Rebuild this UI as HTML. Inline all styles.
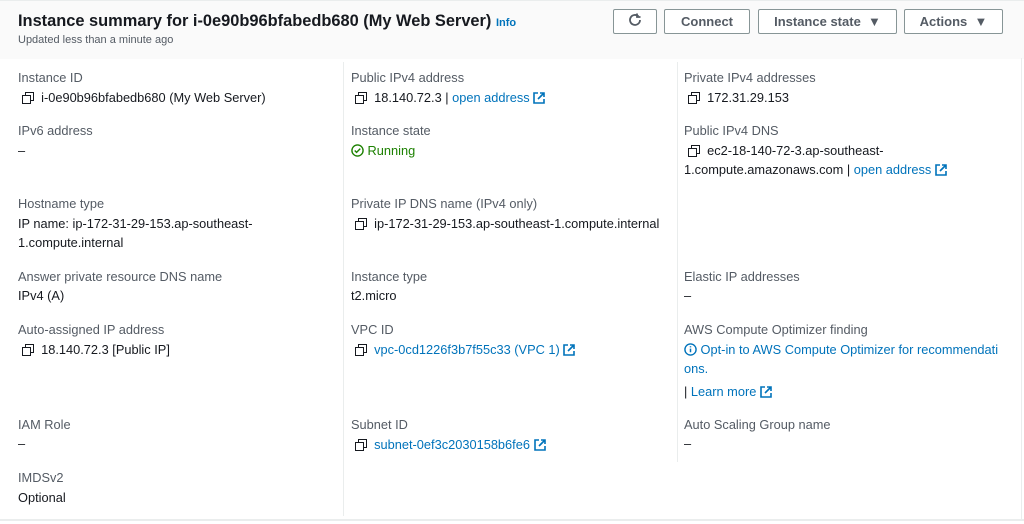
<!DOCTYPE html>
<html><head><meta charset="utf-8"><style>
body{margin:0;width:1024px;height:524px;background:#fff;font-family:"Liberation Sans",Arial,sans-serif;position:relative;overflow:hidden;color:#16191f}
.hd{position:absolute;left:0;top:0;width:1024px;height:58px;background:#fafafa;border-top:1px solid #eaeded}
.t{position:absolute;font-size:12.8px;line-height:16px;white-space:nowrap}
.l{color:#545b64}
a,.a{color:#0073bb;text-decoration:none}
.btn{position:absolute;top:9px;height:23px;border:1px solid #879596;border-radius:2px;background:#fff;font-weight:bold;font-size:13px;line-height:23px;text-align:center;color:#545b64;box-sizing:border-box}
.vl{position:absolute;width:1px;background:#eaeded}
svg{vertical-align:-2px}
</style></head><body>
<div class="hd"></div>
<div class="t" style="left:18px;top:11px;font-size:16.4px;line-height:20px;font-weight:bold">Instance summary for i-0e90b96bfabedb680 (My Web Server) <span class="a" style="font-size:11px">Info</span></div>
<div class="t l" style="left:18px;top:32px;font-size:11px">Updated less than a minute ago</div>
<div class="btn" style="left:613px;width:44px;height:25px;line-height:22px"><svg width="16" height="16" viewBox="0 0 16 16" style="vertical-align:-3px"><path d="M13 8a5 5 0 1 1-1.5-3.6" fill="none" stroke="#545b64" stroke-width="1.8"/><path d="M10 1.5v3.5h3.5" fill="none" stroke="#545b64" stroke-width="1.8"/></svg></div>
<div class="btn" style="left:664px;width:86px;height:25px">Connect</div>
<div class="btn" style="left:758px;width:139px;height:25px">Instance state &nbsp;▼</div>
<div class="btn" style="left:904px;width:99px;height:25px">Actions &nbsp;▼</div>
<div class="vl" style="left:343px;top:62px;height:454px"></div>
<div class="vl" style="left:677px;top:62px;height:400px"></div>
<div style="position:absolute;left:0;top:519px;width:1024px;height:2px;background:#eaeded"></div>
<div class="vl" style="left:1021px;top:58px;height:462px"></div>

<div class="t l" style="left:18px;top:70px">Instance ID</div>
<div class="t" style="left:22px;top:90px"><svg width="12" height="12" viewBox="0 0 12 12"><rect x="0.5" y="3.5" width="8" height="8" fill="none" stroke="#16191f"/><path d="M3.5 3.5v-3h8v8h-3" fill="none" stroke="#16191f"/></svg>&nbsp; i-0e90b96bfabedb680 (My Web Server)</div>
<div class="t l" style="left:18px;top:123px">IPv6 address</div>
<div class="t" style="left:18px;top:143px">–</div>
<div class="t l" style="left:18px;top:196px">Hostname type</div>
<div class="t" style="left:18px;top:216px">IP name: ip-172-31-29-153.ap-southeast-</div>
<div class="t" style="left:18px;top:235px">1.compute.internal</div>
<div class="t l" style="left:18px;top:269px">Answer private resource DNS name</div>
<div class="t" style="left:18px;top:288px">IPv4 (A)</div>
<div class="t l" style="left:18px;top:322px">Auto-assigned IP address</div>
<div class="t" style="left:22px;top:342px"><svg width="12" height="12" viewBox="0 0 12 12"><rect x="0.5" y="3.5" width="8" height="8" fill="none" stroke="#16191f"/><path d="M3.5 3.5v-3h8v8h-3" fill="none" stroke="#16191f"/></svg>&nbsp; 18.140.72.3 [Public IP]</div>
<div class="t l" style="left:18px;top:417px">IAM Role</div>
<div class="t" style="left:18px;top:436px">–</div>
<div class="t l" style="left:18px;top:470px">IMDSv2</div>
<div class="t" style="left:18px;top:490px">Optional</div>

<div class="t l" style="left:351px;top:70px">Public IPv4 address</div>
<div class="t" style="left:355px;top:90px"><svg width="12" height="12" viewBox="0 0 12 12"><rect x="0.5" y="3.5" width="8" height="8" fill="none" stroke="#16191f"/><path d="M3.5 3.5v-3h8v8h-3" fill="none" stroke="#16191f"/></svg>&nbsp; 18.140.72.3 | <span class="a">open address <svg width="12" height="12" viewBox="0 0 12 12"><path d="M5 1H1v10h10V7M7 1h4v4M11 1L5 7" fill="none" stroke="#0073bb" stroke-width="1.6"/></svg></span></div>
<div class="t l" style="left:351px;top:123px">Instance state</div>
<div class="t" style="left:351px;top:143px;color:#1d8102"><svg width="13" height="13" viewBox="0 0 14 14"><circle cx="7" cy="7" r="6" fill="none" stroke="#1d8102" stroke-width="1.5"/><path d="M4 7l2 2 4-4" fill="none" stroke="#1d8102" stroke-width="1.5"/></svg> Running</div>
<div class="t l" style="left:351px;top:196px">Private IP DNS name (IPv4 only)</div>
<div class="t" style="left:355px;top:216px"><svg width="12" height="12" viewBox="0 0 12 12"><rect x="0.5" y="3.5" width="8" height="8" fill="none" stroke="#16191f"/><path d="M3.5 3.5v-3h8v8h-3" fill="none" stroke="#16191f"/></svg>&nbsp; ip-172-31-29-153.ap-southeast-1.compute.internal</div>
<div class="t l" style="left:351px;top:269px">Instance type</div>
<div class="t" style="left:351px;top:288px">t2.micro</div>
<div class="t l" style="left:351px;top:322px">VPC ID</div>
<div class="t" style="left:355px;top:342px"><svg width="12" height="12" viewBox="0 0 12 12"><rect x="0.5" y="3.5" width="8" height="8" fill="none" stroke="#16191f"/><path d="M3.5 3.5v-3h8v8h-3" fill="none" stroke="#16191f"/></svg>&nbsp; <span class="a">vpc-0cd1226f3b7f55c33 (VPC 1) <svg width="12" height="12" viewBox="0 0 12 12"><path d="M5 1H1v10h10V7M7 1h4v4M11 1L5 7" fill="none" stroke="#0073bb" stroke-width="1.6"/></svg></span></div>
<div class="t l" style="left:351px;top:417px">Subnet ID</div>
<div class="t" style="left:355px;top:437px"><svg width="12" height="12" viewBox="0 0 12 12"><rect x="0.5" y="3.5" width="8" height="8" fill="none" stroke="#16191f"/><path d="M3.5 3.5v-3h8v8h-3" fill="none" stroke="#16191f"/></svg>&nbsp; <span class="a">subnet-0ef3c2030158b6fe6 <svg width="12" height="12" viewBox="0 0 12 12"><path d="M5 1H1v10h10V7M7 1h4v4M11 1L5 7" fill="none" stroke="#0073bb" stroke-width="1.6"/></svg></span></div>

<div class="t l" style="left:684px;top:70px">Private IPv4 addresses</div>
<div class="t" style="left:688px;top:90px"><svg width="12" height="12" viewBox="0 0 12 12"><rect x="0.5" y="3.5" width="8" height="8" fill="none" stroke="#16191f"/><path d="M3.5 3.5v-3h8v8h-3" fill="none" stroke="#16191f"/></svg>&nbsp; 172.31.29.153</div>
<div class="t l" style="left:684px;top:123px">Public IPv4 DNS</div>
<div class="t" style="left:688px;top:143px"><svg width="12" height="12" viewBox="0 0 12 12"><rect x="0.5" y="3.5" width="8" height="8" fill="none" stroke="#16191f"/><path d="M3.5 3.5v-3h8v8h-3" fill="none" stroke="#16191f"/></svg>&nbsp; ec2-18-140-72-3.ap-southeast-</div>
<div class="t" style="left:684px;top:162px">1.compute.amazonaws.com | <span class="a">open address <svg width="12" height="12" viewBox="0 0 12 12"><path d="M5 1H1v10h10V7M7 1h4v4M11 1L5 7" fill="none" stroke="#0073bb" stroke-width="1.6"/></svg></span></div>
<div class="t l" style="left:684px;top:269px">Elastic IP addresses</div>
<div class="t" style="left:684px;top:288px">–</div>
<div class="t l" style="left:684px;top:322px">AWS Compute Optimizer finding</div>
<div class="t a" style="left:684px;top:342px"><svg width="13" height="13" viewBox="0 0 14 14"><circle cx="7" cy="7" r="6" fill="none" stroke="#0073bb" stroke-width="1.5"/><path d="M7 6v4M7 3.5v1.2" stroke="#0073bb" stroke-width="1.6"/></svg> Opt-in to AWS Compute Optimizer for recommendati</div>
<div class="t a" style="left:684px;top:361px">ons.</div>
<div class="t" style="left:684px;top:384px">| <span class="a">Learn more <svg width="12" height="12" viewBox="0 0 12 12"><path d="M5 1H1v10h10V7M7 1h4v4M11 1L5 7" fill="none" stroke="#0073bb" stroke-width="1.6"/></svg></span></div>
<div class="t l" style="left:684px;top:417px">Auto Scaling Group name</div>
<div class="t" style="left:684px;top:436px">–</div>
</body></html>
